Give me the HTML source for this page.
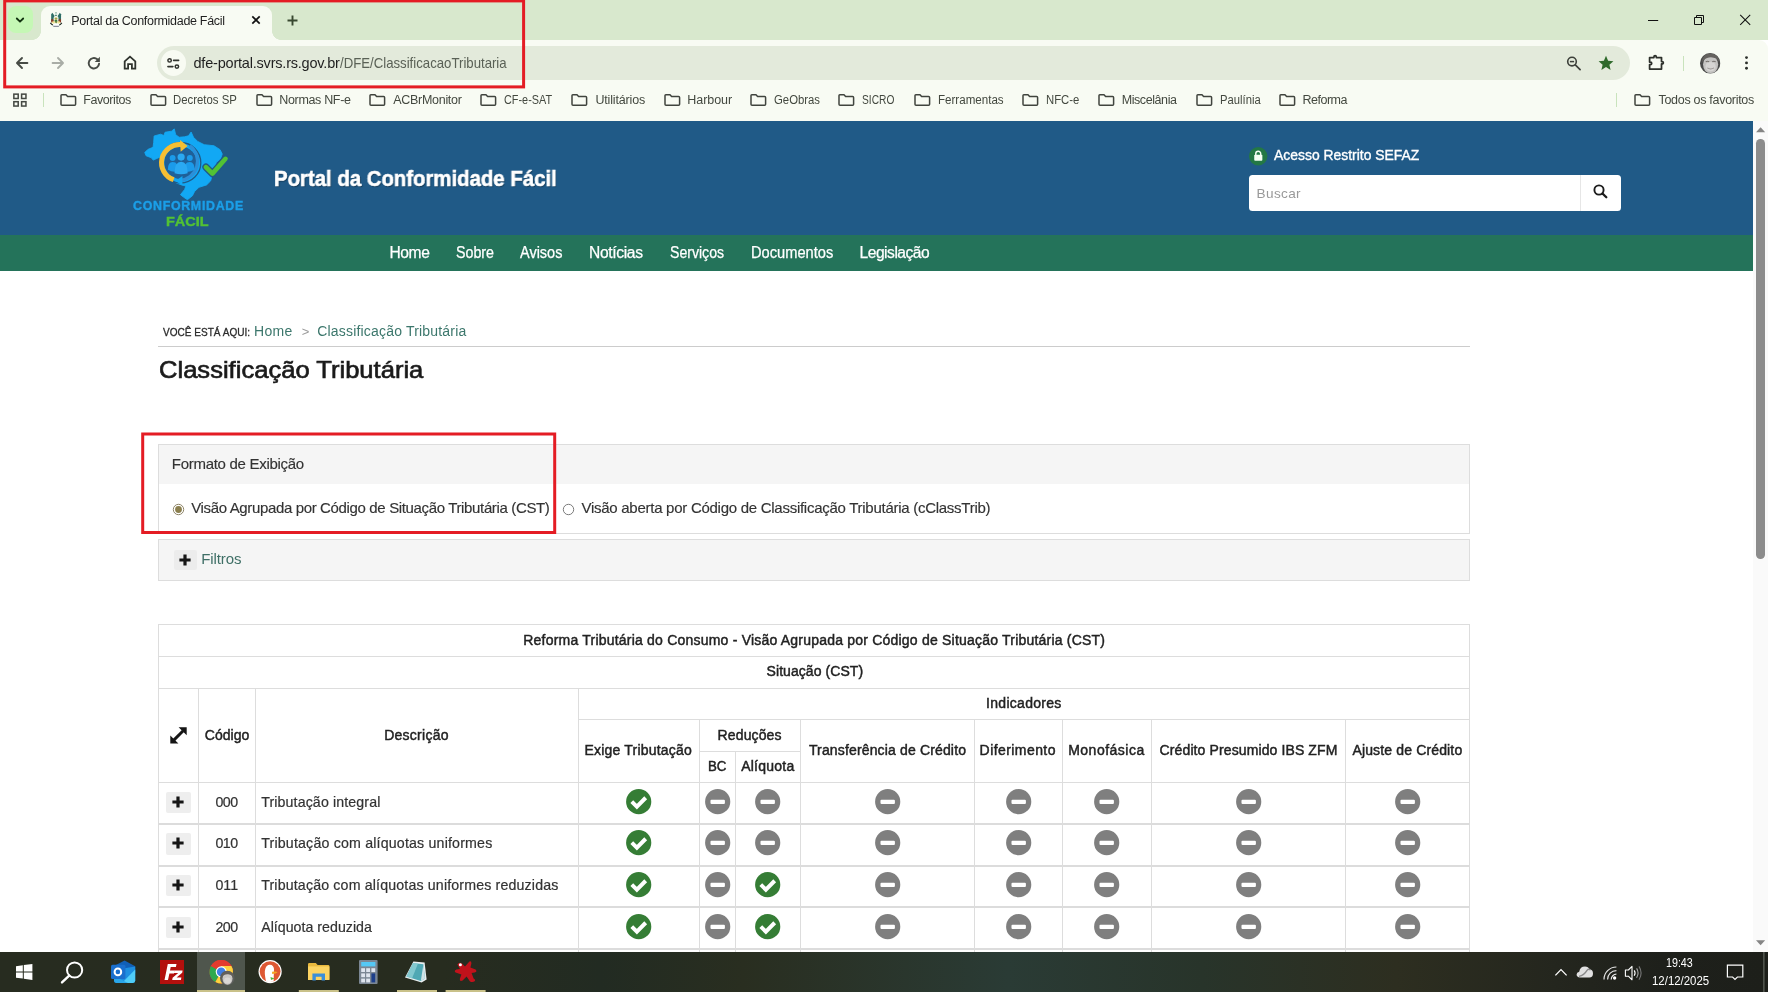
<!DOCTYPE html>
<html lang="pt-BR"><head><meta charset="utf-8"><title>Portal da Conformidade Fácil</title>
<style>
html,body{margin:0;padding:0}
body{width:1768px;height:992px;position:relative;overflow:hidden;background:#fff;font-family:"Liberation Sans",sans-serif;color:#333}
.a{position:absolute}
.t{position:absolute;transform-origin:0 0;white-space:nowrap;line-height:1;font-family:"Liberation Sans",sans-serif}
svg{position:absolute;overflow:visible}
#tabstrip{left:0;top:0;width:1768px;height:40px;background:#d8e8cd}
#toolbar{left:0;top:40px;width:1768px;height:81px;background:#f8fbf3;border-radius:0 9px 0 0}
#tab{left:41px;top:6px;width:231px;height:34px;background:#f8fbf3;border-radius:9px 9px 0 0}
#tab:before,#tab:after{content:"";position:absolute;bottom:0;width:9px;height:9px}
#tab:before{left:-9px;background:radial-gradient(circle at 0 0,transparent 8.6px,#f8fbf3 9.2px)}
#tab:after{right:-9px;background:radial-gradient(circle at 100% 0,transparent 8.6px,#f8fbf3 9.2px)}
#tsb{left:7.6px;top:6.4px;width:25.6px;height:26.2px;border-radius:8px;background:#c5f7b5}
#omni{left:157px;top:46px;width:1473px;height:34px;border-radius:17px;background:#e3eadb}
#sinfo{left:160.5px;top:50px;width:25.5px;height:26px;border-radius:13px;background:#f8fbf3}
.vsep{width:1.3px;background:#c9e3bc}
#page{left:0;top:121px;width:1753px;height:831px;background:#fff;overflow:hidden}
#hdr{left:0;top:0;width:1753px;height:113.5px;background:#205a87}
#nav{left:0;top:113.5px;width:1753px;height:36px;background:#24735a}
#sbar{left:1753px;top:121px;width:15px;height:831px;background:#fafafa}
#thumb{left:3.2px;top:18px;width:8.8px;height:419.5px;border-radius:4.4px;background:#8c8c8c}
#search{left:1249px;top:54px;width:372px;height:35.8px;border-radius:3.5px;background:#fff}
#search i{position:absolute;left:331px;top:0;width:1px;height:36px;background:#e6e6e6}
.panel{border:1px solid #ddd;box-sizing:border-box;background:#fff}
.ph{background:#f5f5f5}
.pbtn{background:#ececec;border-radius:2px}
.red{border:2.8px solid #e41c24;box-sizing:border-box}
.hl{height:1px;background:#ddd}
.vl{width:1px;background:#ddd}
.rl{height:2px;background:#dcdcdc}
#task{left:0;top:952px;width:1768px;height:40px;background:linear-gradient(90deg,#272c20 0,#272c1f 25%,#222b22 34%,#292e20 42%,#2a3b35 57%,#28342a 68%,#2d2e20 79%,#24261e 88%,#1e201b 94%,#1d1f1a 100%)}
.run{top:38px;height:2px;background:#c9c189}
#texts{will-change:transform}

</style></head>
<body>
<div class="a" id="tabstrip"></div>
<div class="a" id="toolbar"></div>
<div class="a" id="tsb"></div>
<div class="a" id="tab"></div>
<svg style="left:14.05px;top:13.95px" width="12" height="12" viewBox="0 0 12 12"><path d="M2.8 4.5 L6 7.7 L9.2 4.5" fill="none" stroke="#12320f" stroke-width="1.8" stroke-linecap="round" stroke-linejoin="round"/></svg>
<svg style="left:44px;top:8px" width="28" height="24" viewBox="0 0 1157 992">
<path d="M296 540 V262 L346 196 L452 352 V540Z" fill="#2e6e66"/><path d="M704 540 V262 L654 196 L548 352 V540Z" fill="#2e6e66"/>
<path d="M296 470 H400 V600 H296Z M704 470 H600 V600 H704Z" fill="#8b3b24"/>
<ellipse cx="498" cy="250" rx="52" ry="70" fill="#dfeee6"/><ellipse cx="496" cy="200" rx="40" ry="34" fill="#9db8aa"/><ellipse cx="494" cy="306" rx="46" ry="22" fill="#3f7b68"/>
<ellipse cx="498" cy="450" rx="104" ry="130" fill="#f1f4e6"/>
<ellipse cx="496" cy="440" rx="60" ry="46" fill="#a9a544"/><ellipse cx="492" cy="530" rx="62" ry="48" fill="#3d7d45"/>
<ellipse cx="390" cy="596" rx="62" ry="44" fill="#f1e291"/><ellipse cx="610" cy="596" rx="62" ry="44" fill="#f1e291"/>
<path d="M440 560 L500 640 L560 560Z" fill="#5c7a1e"/>
<path d="M262 612 Q330 700 380 700 H620 Q670 700 738 612" fill="none" stroke="#1d2a22" stroke-width="46"/>
<path d="M372 662 H628 L612 780 H388Z" fill="#fff"/><path d="M380 730 H620 L612 782 H388Z" fill="#8c909c"/>
</svg>
<svg style="left:251px;top:15px" width="10" height="10" viewBox="0 0 10 10"><path d="M1.3 1.3 L8.7 8.7 M8.7 1.3 L1.3 8.7" stroke="#111" stroke-width="1.7"/></svg>
<svg style="left:285.5px;top:13.5px" width="13" height="13" viewBox="0 0 13 13"><path d="M6.5 1.5 V11.5 M1.5 6.5 H11.5" stroke="#384830" stroke-width="1.9"/></svg>
<svg style="left:1648px;top:14px" width="104" height="12" viewBox="0 0 104 12"><path d="M0 6.5 H10.2" stroke="#111" stroke-width="1"/><path d="M46.5 3.5 H53.5 V10.5 H46.5 Z M48.5 3.5 V1.5 H55.5 V8.5 H53.5" fill="none" stroke="#111" stroke-width="1"/><path d="M92.2 .9 L102.2 10.9 M102.2 .9 L92.2 10.9" stroke="#111" stroke-width="1.05"/></svg>
<svg style="left:15px;top:56px" width="14" height="14" viewBox="0 0 14 14"><path d="M12.4 7 H2.4 M7 2 L2 7 L7 12" fill="none" stroke="#474b45" stroke-width="1.9" stroke-linecap="round" stroke-linejoin="round"/></svg>
<svg style="left:51px;top:56px" width="14" height="14" viewBox="0 0 14 14"><path d="M1.6 7 H11.6 M7 2 L12 7 L7 12" fill="none" stroke="#a9ada6" stroke-width="1.9" stroke-linecap="round" stroke-linejoin="round"/></svg>
<svg style="left:87px;top:56px" width="14" height="14" viewBox="0 0 14 14"><path d="M12.1 7.6 A5.2 5.2 0 1 1 10.3 3.3" fill="none" stroke="#474b45" stroke-width="1.9" stroke-linecap="round"/><path d="M12.9 .8 V6 H7.7 Z" fill="#474b45"/></svg>
<svg style="left:123px;top:55px" width="14" height="15" viewBox="0 0 14 15"><path d="M1.7 6.4 L7 1.7 L12.3 6.4 V13.7 H8.9 V9.2 H5.1 V13.7 H1.7 Z" fill="none" stroke="#2f332d" stroke-width="1.8" stroke-linejoin="miter"/></svg>
<div class="a" id="omni"></div><div class="a" id="sinfo"></div>
<svg style="left:167px;top:57.6px" width="13" height="11" viewBox="0 0 13 11"><circle cx="2.6" cy="2.4" r="1.7" fill="none" stroke="#30332e" stroke-width="1.5"/><path d="M6.6 2.4 H11.6 M.9 8.6 H5.9" stroke="#30332e" stroke-width="1.6" stroke-linecap="round"/><circle cx="9.9" cy="8.6" r="1.7" fill="none" stroke="#30332e" stroke-width="1.5"/></svg>
<svg style="left:1566px;top:55.5px" width="16" height="16" viewBox="0 0 16 16"><circle cx="6" cy="5.6" r="4.3" fill="none" stroke="#3d403a" stroke-width="1.6"/><path d="M9.3 8.9 L14.1 13.7" stroke="#3d403a" stroke-width="1.7" stroke-linecap="round"/><path d="M3.9 5.6 H8.1" stroke="#3d403a" stroke-width="1.5"/></svg>
<svg style="left:1598px;top:54.5px" width="16" height="16" viewBox="0 0 16 16"><path d="M8 .8 L10.1 5.7 L15.4 6.2 L11.4 9.7 L12.6 14.9 L8 12.1 L3.4 14.9 L4.6 9.7 L.6 6.2 L5.9 5.7 Z" fill="#2f6a2b"/></svg>
<svg style="left:1648px;top:54px" width="18" height="17" viewBox="0 0 18 17"><path d="M1.6 3.6 H5.9 V2.9 A1.2 1.2 0 0 1 8.3 2.9 V3.6 H13.5 V7.6 H14.2 A1.15 1.15 0 0 1 14.2 9.9 H13.5 V15 H1.6 V10.6 H2.4 A1.3 1.3 0 0 0 2.4 8 H1.6 Z" fill="none" stroke="#2d302b" stroke-width="1.75" stroke-linejoin="round"/></svg>
<div class="a vsep" style="left:1682.5px;top:55.5px;height:15px"></div>
<svg style="left:1699.8px;top:52.7px" width="20.4" height="20.4" viewBox="0 0 20 20"><defs><clipPath id="av"><circle cx="10" cy="10" r="10"/></clipPath></defs>
<g clip-path="url(#av)"><rect width="20" height="20" fill="#4a4b4a"/><ellipse cx="10.4" cy="11.4" rx="7.4" ry="9" fill="#c4c3c1"/><ellipse cx="10.4" cy="13.4" rx="5" ry="4.6" fill="#d6d5d3"/><path d="M1.6 10 Q2.4 0 10.6 .4 Q18.6 .6 19 9.4 Q17 4.8 13.4 4.6 Q10 3.6 7 5 Q3.6 6 1.6 10Z" fill="#64615e"/><path d="M5.6 8.6 Q7.4 7.6 9 8.6 M12 8.6 Q13.6 7.6 15.4 8.6" stroke="#77736f" stroke-width="1.1" fill="none"/><path d="M7.2 14.6 Q10.4 16.6 13.8 14.6" stroke="#9a9693" stroke-width="1" fill="none"/><path d="M0 20 Q.6 17.2 4 17.8 Q10.4 21.4 17 17.8 Q19.6 17.4 20 20Z" fill="#3a3b3c"/></g></svg>
<svg style="left:1743.5px;top:55px" width="5" height="16" viewBox="0 0 5 16"><circle cx="2.5" cy="2.6" r="1.45" fill="#2c2f2a"/><circle cx="2.5" cy="7.9" r="1.45" fill="#2c2f2a"/><circle cx="2.5" cy="13.2" r="1.45" fill="#2c2f2a"/></svg>
<svg style="left:12.9px;top:92.7px" width="14.2" height="14.2" viewBox="0 0 15 15"><g fill="none" stroke="#454943" stroke-width="1.6"><rect x=".9" y="1.2" width="4.6" height="4.6"/><rect x="9.1" y="1.2" width="4.6" height="4.6"/><rect x=".9" y="9.2" width="4.6" height="4.6"/><rect x="9.1" y="9.2" width="4.6" height="4.6"/></g></svg>
<div class="a vsep" style="left:42.5px;top:92.5px;height:14.5px"></div>
<div class="a vsep" style="left:1616px;top:92.5px;height:14.5px"></div>
<svg style="left:60px;top:94px" width="17" height="12" viewBox="0 0 17 12"><path d="M1 1.6 Q1 .8 1.8 .8 H6 L7.6 2.6 H14.6 Q15.6 2.6 15.6 3.6 V10.2 Q15.6 11.2 14.6 11.2 H2 Q1 11.2 1 10.2 Z" fill="none" stroke="#40443e" stroke-width="1.5" stroke-linejoin="round"/></svg>
<svg style="left:150px;top:94px" width="17" height="12" viewBox="0 0 17 12"><path d="M1 1.6 Q1 .8 1.8 .8 H6 L7.6 2.6 H14.6 Q15.6 2.6 15.6 3.6 V10.2 Q15.6 11.2 14.6 11.2 H2 Q1 11.2 1 10.2 Z" fill="none" stroke="#40443e" stroke-width="1.5" stroke-linejoin="round"/></svg>
<svg style="left:256px;top:94px" width="17" height="12" viewBox="0 0 17 12"><path d="M1 1.6 Q1 .8 1.8 .8 H6 L7.6 2.6 H14.6 Q15.6 2.6 15.6 3.6 V10.2 Q15.6 11.2 14.6 11.2 H2 Q1 11.2 1 10.2 Z" fill="none" stroke="#40443e" stroke-width="1.5" stroke-linejoin="round"/></svg>
<svg style="left:369px;top:94px" width="17" height="12" viewBox="0 0 17 12"><path d="M1 1.6 Q1 .8 1.8 .8 H6 L7.6 2.6 H14.6 Q15.6 2.6 15.6 3.6 V10.2 Q15.6 11.2 14.6 11.2 H2 Q1 11.2 1 10.2 Z" fill="none" stroke="#40443e" stroke-width="1.5" stroke-linejoin="round"/></svg>
<svg style="left:480px;top:94px" width="17" height="12" viewBox="0 0 17 12"><path d="M1 1.6 Q1 .8 1.8 .8 H6 L7.6 2.6 H14.6 Q15.6 2.6 15.6 3.6 V10.2 Q15.6 11.2 14.6 11.2 H2 Q1 11.2 1 10.2 Z" fill="none" stroke="#40443e" stroke-width="1.5" stroke-linejoin="round"/></svg>
<svg style="left:571px;top:94px" width="17" height="12" viewBox="0 0 17 12"><path d="M1 1.6 Q1 .8 1.8 .8 H6 L7.6 2.6 H14.6 Q15.6 2.6 15.6 3.6 V10.2 Q15.6 11.2 14.6 11.2 H2 Q1 11.2 1 10.2 Z" fill="none" stroke="#40443e" stroke-width="1.5" stroke-linejoin="round"/></svg>
<svg style="left:664px;top:94px" width="17" height="12" viewBox="0 0 17 12"><path d="M1 1.6 Q1 .8 1.8 .8 H6 L7.6 2.6 H14.6 Q15.6 2.6 15.6 3.6 V10.2 Q15.6 11.2 14.6 11.2 H2 Q1 11.2 1 10.2 Z" fill="none" stroke="#40443e" stroke-width="1.5" stroke-linejoin="round"/></svg>
<svg style="left:750px;top:94px" width="17" height="12" viewBox="0 0 17 12"><path d="M1 1.6 Q1 .8 1.8 .8 H6 L7.6 2.6 H14.6 Q15.6 2.6 15.6 3.6 V10.2 Q15.6 11.2 14.6 11.2 H2 Q1 11.2 1 10.2 Z" fill="none" stroke="#40443e" stroke-width="1.5" stroke-linejoin="round"/></svg>
<svg style="left:838px;top:94px" width="17" height="12" viewBox="0 0 17 12"><path d="M1 1.6 Q1 .8 1.8 .8 H6 L7.6 2.6 H14.6 Q15.6 2.6 15.6 3.6 V10.2 Q15.6 11.2 14.6 11.2 H2 Q1 11.2 1 10.2 Z" fill="none" stroke="#40443e" stroke-width="1.5" stroke-linejoin="round"/></svg>
<svg style="left:914px;top:94px" width="17" height="12" viewBox="0 0 17 12"><path d="M1 1.6 Q1 .8 1.8 .8 H6 L7.6 2.6 H14.6 Q15.6 2.6 15.6 3.6 V10.2 Q15.6 11.2 14.6 11.2 H2 Q1 11.2 1 10.2 Z" fill="none" stroke="#40443e" stroke-width="1.5" stroke-linejoin="round"/></svg>
<svg style="left:1022px;top:94px" width="17" height="12" viewBox="0 0 17 12"><path d="M1 1.6 Q1 .8 1.8 .8 H6 L7.6 2.6 H14.6 Q15.6 2.6 15.6 3.6 V10.2 Q15.6 11.2 14.6 11.2 H2 Q1 11.2 1 10.2 Z" fill="none" stroke="#40443e" stroke-width="1.5" stroke-linejoin="round"/></svg>
<svg style="left:1098px;top:94px" width="17" height="12" viewBox="0 0 17 12"><path d="M1 1.6 Q1 .8 1.8 .8 H6 L7.6 2.6 H14.6 Q15.6 2.6 15.6 3.6 V10.2 Q15.6 11.2 14.6 11.2 H2 Q1 11.2 1 10.2 Z" fill="none" stroke="#40443e" stroke-width="1.5" stroke-linejoin="round"/></svg>
<svg style="left:1196px;top:94px" width="17" height="12" viewBox="0 0 17 12"><path d="M1 1.6 Q1 .8 1.8 .8 H6 L7.6 2.6 H14.6 Q15.6 2.6 15.6 3.6 V10.2 Q15.6 11.2 14.6 11.2 H2 Q1 11.2 1 10.2 Z" fill="none" stroke="#40443e" stroke-width="1.5" stroke-linejoin="round"/></svg>
<svg style="left:1279px;top:94px" width="17" height="12" viewBox="0 0 17 12"><path d="M1 1.6 Q1 .8 1.8 .8 H6 L7.6 2.6 H14.6 Q15.6 2.6 15.6 3.6 V10.2 Q15.6 11.2 14.6 11.2 H2 Q1 11.2 1 10.2 Z" fill="none" stroke="#40443e" stroke-width="1.5" stroke-linejoin="round"/></svg>
<svg style="left:1634px;top:94px" width="17" height="12" viewBox="0 0 17 12"><path d="M1 1.6 Q1 .8 1.8 .8 H6 L7.6 2.6 H14.6 Q15.6 2.6 15.6 3.6 V10.2 Q15.6 11.2 14.6 11.2 H2 Q1 11.2 1 10.2 Z" fill="none" stroke="#40443e" stroke-width="1.5" stroke-linejoin="round"/></svg>
<div class="a" id="page">
<div class="a" id="hdr"></div><div class="a" id="nav"></div>
<svg style="left:128px;top:3px" width="122" height="107.95" viewBox="0 0 1121 992">
<path d="M425 45 L438 98 L470 122 L520 118 L556 108 L580 74 L602 122 L640 160 L700 190 L790 200 L846 236 L866 276 L850 322 L812 352 L800 410 L772 470 L760 522 L722 560 L652 582 L612 620 L592 660 L546 696 L510 672 L482 650 L520 602 L532 570 L492 560 L440 540 L330 420 L302 300 L232 332 L214 310 L166 292 L154 262 L182 234 L230 214 L236 168 L240 110 L300 94 L330 106 L340 76 L400 66 Z" fill="#12a8f4" stroke="#12a8f4" stroke-width="8" stroke-linejoin="round"/>
<circle cx="483" cy="356" r="150" fill="#1f6098"/>
<circle cx="483" cy="356" r="186" fill="none" stroke="#205a87" stroke-width="12"/>
<!-- blue arc (right half) -->
<path d="M568 200 A178 178 0 0 1 470 520" fill="none" stroke="#2b8fd8" stroke-width="30"/>
<path d="M500 478 L436 524 L500 566 Z" fill="#12a8f4"/>
<!-- yellow arc (left half) + arrow head -->
<path d="M420 512 A166 166 0 0 1 492 190" fill="none" stroke="#f6bf33" stroke-width="46"/>
<path d="M478 148 L548 202 L484 254 Z" fill="#f6bf33"/>
<!-- people -->
<g fill="#1b9bea">
<circle cx="410" cy="312" r="27"/><circle cx="568" cy="312" r="27"/>
<path d="M366 420 Q366 350 410 350 Q440 350 452 372 L440 440 Q392 436 366 420Z"/>
<path d="M612 420 Q612 350 568 350 Q538 350 526 372 L538 440 Q586 436 612 420Z"/>
</g>
<g fill="#2aa9f2">
<circle cx="488" cy="304" r="33"/>
<path d="M428 452 Q428 346 488 346 Q548 346 548 452 Q488 472 428 452Z"/>
</g>
<!-- check -->
<path d="M716 396 L776 456 L896 320" fill="none" stroke="#205a87" stroke-width="66" stroke-linecap="round" stroke-linejoin="round"/>
<path d="M716 396 L776 456 L896 320" fill="none" stroke="#52c234" stroke-width="42" stroke-linecap="round" stroke-linejoin="round"/>
</svg>

<svg style="left:1248.9px;top:25.6px" width="18.4" height="18.4" viewBox="0 0 19 19"><circle cx="9.5" cy="9.5" r="9.5" fill="#237845"/><rect x="5.4" y="8" width="8.4" height="6.2" rx=".9" fill="#f4fff4"/><path d="M7 8.4 V6.9 A2.55 2.55 0 0 1 12.1 6.9 V8.4" fill="none" stroke="#f4fff4" stroke-width="1.5"/></svg>
<div class="a" id="search"><i></i></div>
<svg style="left:1593.4px;top:62.7px" width="15" height="15" viewBox="0 0 15 15"><circle cx="6" cy="6" r="4.6" fill="none" stroke="#1c1c1c" stroke-width="1.9"/><path d="M9.5 9.5 L13.3 13.3" stroke="#1c1c1c" stroke-width="2.3" stroke-linecap="round"/></svg>
<div class="a" style="left:158px;top:225px;width:1312px;height:1px;background:#ccc"></div>
<div class="a panel" style="left:158px;top:323px;width:1312px;height:90px"><div class="a ph" style="left:0;top:0;width:1310px;height:38.6px"></div></div>
<svg style="left:172.3px;top:381.7px" width="13" height="13" viewBox="0 0 13 13"><circle cx="6.5" cy="6.5" r="5.2" fill="#fff" stroke="#8d8468" stroke-width="1"/><circle cx="6.5" cy="6.5" r="3.4" fill="#8b7f4e"/></svg>
<svg style="left:562.4px;top:381.7px" width="13" height="13" viewBox="0 0 13 13"><circle cx="6.5" cy="6.5" r="5.2" fill="#fff" stroke="#7b7b7b" stroke-width="1"/></svg>
<div class="a panel ph" style="left:158px;top:418px;width:1312px;height:41.5px"></div>
<div class="a pbtn" style="left:173.5px;top:428.5px;width:23.5px;height:20.5px"></div>
<svg style="left:178.9px;top:432.6px" width="12" height="12" viewBox="0 0 12 12"><path d="M6 .4 V11.6 M.4 6 H11.6" stroke="#151515" stroke-width="3.2"/></svg>
<div class="a" style="left:158px;top:503px;width:1312px;height:328px;border:1px solid #ddd;border-bottom:0;box-sizing:border-box"></div>
<div class="a hl" style="left:158px;top:535px;width:1312px"></div>
<div class="a hl" style="left:158px;top:567px;width:1312px"></div>
<div class="a hl" style="left:578px;top:598px;width:892px"></div>
<div class="a hl" style="left:699px;top:630px;width:102px"></div>
<div class="a hl" style="left:158px;top:661px;width:1312px"></div>
<div class="a rl" style="left:158px;top:701.9px;width:1312px"></div>
<div class="a rl" style="left:158px;top:743.7px;width:1312px"></div>
<div class="a rl" style="left:158px;top:784.8px;width:1312px"></div>
<div class="a rl" style="left:158px;top:826.6px;width:1312px"></div>
<div class="a vl" style="left:198px;top:567px;height:264px"></div>
<div class="a vl" style="left:255px;top:567px;height:264px"></div>
<div class="a vl" style="left:578px;top:567px;height:264px"></div>
<div class="a vl" style="left:699px;top:598px;height:233px"></div>
<div class="a vl" style="left:735px;top:630px;height:201px"></div>
<div class="a vl" style="left:800px;top:598px;height:233px"></div>
<div class="a vl" style="left:974px;top:598px;height:233px"></div>
<div class="a vl" style="left:1062px;top:598px;height:233px"></div>
<div class="a vl" style="left:1151px;top:598px;height:233px"></div>
<div class="a vl" style="left:1345px;top:598px;height:233px"></div>
<svg style="left:170.2px;top:605.6px" width="17" height="16.8" viewBox="0 0 17 17"><path d="M4 13 L13 4" stroke="#151515" stroke-width="3"/><path d="M8.6 .2 H16.8 V8.4 Z M.2 8.6 V16.8 H8.4 Z" fill="#151515"/></svg>
<div class="a pbtn" style="left:166.2px;top:670.8px;width:24.6px;height:21.5px;background:#eee"></div>
<svg style="left:172.1px;top:675.1px" width="12" height="12" viewBox="0 0 12 12"><path d="M6 .4 V11.6 M.4 6 H11.6" stroke="#151515" stroke-width="3.2"/></svg>
<svg style="left:626.0px;top:667.7px" width="25.4" height="25.4" viewBox="0 0 25 25"><circle cx="12.5" cy="12.5" r="12.4" fill="#357d35"/><path d="M5.7 12.5 L10.7 17.4 L19.4 8.6" fill="none" stroke="#fff" stroke-width="3.9"/></svg>
<svg style="left:704.7px;top:667.7px" width="25.4" height="25.4" viewBox="0 0 25 25"><circle cx="12.5" cy="12.5" r="12.4" fill="#7f7f7f"/><rect x="5.4" y="10.5" width="14.2" height="4.2" rx="1" fill="#fff"/></svg>
<svg style="left:754.9px;top:667.7px" width="25.4" height="25.4" viewBox="0 0 25 25"><circle cx="12.5" cy="12.5" r="12.4" fill="#7f7f7f"/><rect x="5.4" y="10.5" width="14.2" height="4.2" rx="1" fill="#fff"/></svg>
<svg style="left:875.0px;top:667.7px" width="25.4" height="25.4" viewBox="0 0 25 25"><circle cx="12.5" cy="12.5" r="12.4" fill="#7f7f7f"/><rect x="5.4" y="10.5" width="14.2" height="4.2" rx="1" fill="#fff"/></svg>
<svg style="left:1005.7px;top:667.7px" width="25.4" height="25.4" viewBox="0 0 25 25"><circle cx="12.5" cy="12.5" r="12.4" fill="#7f7f7f"/><rect x="5.4" y="10.5" width="14.2" height="4.2" rx="1" fill="#fff"/></svg>
<svg style="left:1094.3px;top:667.7px" width="25.4" height="25.4" viewBox="0 0 25 25"><circle cx="12.5" cy="12.5" r="12.4" fill="#7f7f7f"/><rect x="5.4" y="10.5" width="14.2" height="4.2" rx="1" fill="#fff"/></svg>
<svg style="left:1235.9px;top:667.7px" width="25.4" height="25.4" viewBox="0 0 25 25"><circle cx="12.5" cy="12.5" r="12.4" fill="#7f7f7f"/><rect x="5.4" y="10.5" width="14.2" height="4.2" rx="1" fill="#fff"/></svg>
<svg style="left:1395.2px;top:667.7px" width="25.4" height="25.4" viewBox="0 0 25 25"><circle cx="12.5" cy="12.5" r="12.4" fill="#7f7f7f"/><rect x="5.4" y="10.5" width="14.2" height="4.2" rx="1" fill="#fff"/></svg>
<div class="a pbtn" style="left:166.2px;top:712.0px;width:24.6px;height:21.5px;background:#eee"></div>
<svg style="left:172.1px;top:716.3px" width="12" height="12" viewBox="0 0 12 12"><path d="M6 .4 V11.6 M.4 6 H11.6" stroke="#151515" stroke-width="3.2"/></svg>
<svg style="left:626.0px;top:708.9px" width="25.4" height="25.4" viewBox="0 0 25 25"><circle cx="12.5" cy="12.5" r="12.4" fill="#357d35"/><path d="M5.7 12.5 L10.7 17.4 L19.4 8.6" fill="none" stroke="#fff" stroke-width="3.9"/></svg>
<svg style="left:704.7px;top:708.9px" width="25.4" height="25.4" viewBox="0 0 25 25"><circle cx="12.5" cy="12.5" r="12.4" fill="#7f7f7f"/><rect x="5.4" y="10.5" width="14.2" height="4.2" rx="1" fill="#fff"/></svg>
<svg style="left:754.9px;top:708.9px" width="25.4" height="25.4" viewBox="0 0 25 25"><circle cx="12.5" cy="12.5" r="12.4" fill="#7f7f7f"/><rect x="5.4" y="10.5" width="14.2" height="4.2" rx="1" fill="#fff"/></svg>
<svg style="left:875.0px;top:708.9px" width="25.4" height="25.4" viewBox="0 0 25 25"><circle cx="12.5" cy="12.5" r="12.4" fill="#7f7f7f"/><rect x="5.4" y="10.5" width="14.2" height="4.2" rx="1" fill="#fff"/></svg>
<svg style="left:1005.7px;top:708.9px" width="25.4" height="25.4" viewBox="0 0 25 25"><circle cx="12.5" cy="12.5" r="12.4" fill="#7f7f7f"/><rect x="5.4" y="10.5" width="14.2" height="4.2" rx="1" fill="#fff"/></svg>
<svg style="left:1094.3px;top:708.9px" width="25.4" height="25.4" viewBox="0 0 25 25"><circle cx="12.5" cy="12.5" r="12.4" fill="#7f7f7f"/><rect x="5.4" y="10.5" width="14.2" height="4.2" rx="1" fill="#fff"/></svg>
<svg style="left:1235.9px;top:708.9px" width="25.4" height="25.4" viewBox="0 0 25 25"><circle cx="12.5" cy="12.5" r="12.4" fill="#7f7f7f"/><rect x="5.4" y="10.5" width="14.2" height="4.2" rx="1" fill="#fff"/></svg>
<svg style="left:1395.2px;top:708.9px" width="25.4" height="25.4" viewBox="0 0 25 25"><circle cx="12.5" cy="12.5" r="12.4" fill="#7f7f7f"/><rect x="5.4" y="10.5" width="14.2" height="4.2" rx="1" fill="#fff"/></svg>
<div class="a pbtn" style="left:166.2px;top:753.8px;width:24.6px;height:21.5px;background:#eee"></div>
<svg style="left:172.1px;top:758.1px" width="12" height="12" viewBox="0 0 12 12"><path d="M6 .4 V11.6 M.4 6 H11.6" stroke="#151515" stroke-width="3.2"/></svg>
<svg style="left:626.0px;top:750.7px" width="25.4" height="25.4" viewBox="0 0 25 25"><circle cx="12.5" cy="12.5" r="12.4" fill="#357d35"/><path d="M5.7 12.5 L10.7 17.4 L19.4 8.6" fill="none" stroke="#fff" stroke-width="3.9"/></svg>
<svg style="left:704.7px;top:750.7px" width="25.4" height="25.4" viewBox="0 0 25 25"><circle cx="12.5" cy="12.5" r="12.4" fill="#7f7f7f"/><rect x="5.4" y="10.5" width="14.2" height="4.2" rx="1" fill="#fff"/></svg>
<svg style="left:754.9px;top:750.7px" width="25.4" height="25.4" viewBox="0 0 25 25"><circle cx="12.5" cy="12.5" r="12.4" fill="#357d35"/><path d="M5.7 12.5 L10.7 17.4 L19.4 8.6" fill="none" stroke="#fff" stroke-width="3.9"/></svg>
<svg style="left:875.0px;top:750.7px" width="25.4" height="25.4" viewBox="0 0 25 25"><circle cx="12.5" cy="12.5" r="12.4" fill="#7f7f7f"/><rect x="5.4" y="10.5" width="14.2" height="4.2" rx="1" fill="#fff"/></svg>
<svg style="left:1005.7px;top:750.7px" width="25.4" height="25.4" viewBox="0 0 25 25"><circle cx="12.5" cy="12.5" r="12.4" fill="#7f7f7f"/><rect x="5.4" y="10.5" width="14.2" height="4.2" rx="1" fill="#fff"/></svg>
<svg style="left:1094.3px;top:750.7px" width="25.4" height="25.4" viewBox="0 0 25 25"><circle cx="12.5" cy="12.5" r="12.4" fill="#7f7f7f"/><rect x="5.4" y="10.5" width="14.2" height="4.2" rx="1" fill="#fff"/></svg>
<svg style="left:1235.9px;top:750.7px" width="25.4" height="25.4" viewBox="0 0 25 25"><circle cx="12.5" cy="12.5" r="12.4" fill="#7f7f7f"/><rect x="5.4" y="10.5" width="14.2" height="4.2" rx="1" fill="#fff"/></svg>
<svg style="left:1395.2px;top:750.7px" width="25.4" height="25.4" viewBox="0 0 25 25"><circle cx="12.5" cy="12.5" r="12.4" fill="#7f7f7f"/><rect x="5.4" y="10.5" width="14.2" height="4.2" rx="1" fill="#fff"/></svg>
<div class="a pbtn" style="left:166.2px;top:795.9px;width:24.6px;height:21.5px;background:#eee"></div>
<svg style="left:172.1px;top:800.2px" width="12" height="12" viewBox="0 0 12 12"><path d="M6 .4 V11.6 M.4 6 H11.6" stroke="#151515" stroke-width="3.2"/></svg>
<svg style="left:626.0px;top:792.8px" width="25.4" height="25.4" viewBox="0 0 25 25"><circle cx="12.5" cy="12.5" r="12.4" fill="#357d35"/><path d="M5.7 12.5 L10.7 17.4 L19.4 8.6" fill="none" stroke="#fff" stroke-width="3.9"/></svg>
<svg style="left:704.7px;top:792.8px" width="25.4" height="25.4" viewBox="0 0 25 25"><circle cx="12.5" cy="12.5" r="12.4" fill="#7f7f7f"/><rect x="5.4" y="10.5" width="14.2" height="4.2" rx="1" fill="#fff"/></svg>
<svg style="left:754.9px;top:792.8px" width="25.4" height="25.4" viewBox="0 0 25 25"><circle cx="12.5" cy="12.5" r="12.4" fill="#357d35"/><path d="M5.7 12.5 L10.7 17.4 L19.4 8.6" fill="none" stroke="#fff" stroke-width="3.9"/></svg>
<svg style="left:875.0px;top:792.8px" width="25.4" height="25.4" viewBox="0 0 25 25"><circle cx="12.5" cy="12.5" r="12.4" fill="#7f7f7f"/><rect x="5.4" y="10.5" width="14.2" height="4.2" rx="1" fill="#fff"/></svg>
<svg style="left:1005.7px;top:792.8px" width="25.4" height="25.4" viewBox="0 0 25 25"><circle cx="12.5" cy="12.5" r="12.4" fill="#7f7f7f"/><rect x="5.4" y="10.5" width="14.2" height="4.2" rx="1" fill="#fff"/></svg>
<svg style="left:1094.3px;top:792.8px" width="25.4" height="25.4" viewBox="0 0 25 25"><circle cx="12.5" cy="12.5" r="12.4" fill="#7f7f7f"/><rect x="5.4" y="10.5" width="14.2" height="4.2" rx="1" fill="#fff"/></svg>
<svg style="left:1235.9px;top:792.8px" width="25.4" height="25.4" viewBox="0 0 25 25"><circle cx="12.5" cy="12.5" r="12.4" fill="#7f7f7f"/><rect x="5.4" y="10.5" width="14.2" height="4.2" rx="1" fill="#fff"/></svg>
<svg style="left:1395.2px;top:792.8px" width="25.4" height="25.4" viewBox="0 0 25 25"><circle cx="12.5" cy="12.5" r="12.4" fill="#7f7f7f"/><rect x="5.4" y="10.5" width="14.2" height="4.2" rx="1" fill="#fff"/></svg>
</div>
<div class="a" id="sbar"><div class="a" id="thumb"></div><svg style="left:3px;top:5.8px" width="9.2" height="5.4" viewBox="0 0 9 5"><path d="M0 5 L4.5 0 L9 5Z" fill="#858585"/></svg><svg style="left:3px;top:818.6px" width="9.2" height="5.4" viewBox="0 0 9 5"><path d="M0 0 L4.5 5 L9 0Z" fill="#858585"/></svg></div>
<div class="a" id="task">
<svg style="left:0;top:0" width="1768" height="40" viewBox="0 952 1768 40">
<rect x="197" y="952" width="48" height="40" fill="#4f564d"/>
<g fill="#c9c189"><rect x="197" y="990" width="48" height="2"/><rect x="298.8" y="990" width="40" height="2"/><rect x="397" y="990" width="40" height="2"/><rect x="445.6" y="990" width="40" height="2"/></g>
<!-- windows logo -->
<path d="M16 966.2 L22.8 965.2 V971.4 H16 Z M23.8 965.1 L32.4 963.9 V971.4 H23.8 Z M16 972.4 H22.8 V978.6 L16 977.7 Z M23.8 972.4 H32.4 V979.9 L23.8 978.7 Z" fill="#fff"/>
<!-- search -->
<circle cx="74.6" cy="970" r="7.6" fill="none" stroke="#fff" stroke-width="2"/><path d="M69.2 975.6 L62 982.4" stroke="#fff" stroke-width="2.4" stroke-linecap="round"/>
<!-- outlook -->
<path d="M113.4 966.2 L124.6 960.4 L135.2 966.2 V973 H113.4Z" fill="#1160b7"/>
<path d="M114 970 L135.2 966.4 V980.6 Q135.2 983 132.8 983 H116.4 Q114 983 114 980.6Z" fill="#1d8fe0"/>
<path d="M122 983 L135.2 969.6 V980.6 Q135.2 983 132.8 983Z" fill="#4fcdf8"/>
<path d="M114 976 L128 983 H116.4 Q114 983 114 980.6Z" fill="#2aa7ea"/>
<rect x="111" y="964.7" width="14.4" height="14.4" rx="1.6" fill="#1a6fcd"/>
<circle cx="117.9" cy="971.9" r="3.3" fill="none" stroke="#fff" stroke-width="2"/>
<!-- filezilla -->
<rect x="160" y="960" width="24" height="24" fill="#b3100d"/>
<path d="M164.5 980 L167.8 964 H176.5 L175.9 967 H170.7 L170 970.4 H174.6 L174 973.4 H169.4 L168 980Z" fill="#fff"/>
<path d="M174.4 970.6 H182.6 L182.2 972.8 L176.6 977.6 H181.4 L180.9 980 H172.2 L172.6 977.8 L178.2 973 H173.9Z" fill="#fff"/>
<!-- chrome -->
<g transform="translate(0.7,0.3) translate(220.5,971.5) scale(1.04) translate(-220.5,-971.5)">
<circle cx="220.5" cy="971.5" r="11.3" fill="#e33b2e"/>
<path d="M220.5 971.5 L210.7 965.9 A11.3 11.3 0 0 0 214.9 981.3 Z" fill="#2da94f"/>
<path d="M220.5 971.5 L214.9 981.3 A11.3 11.3 0 0 0 231.8 971.5 Q231.8 968 230.3 965.9 H220.5Z" fill="#fdd23e"/>
<path d="M210.7 965.9 A11.3 11.3 0 0 1 230.3 965.9 L220.5 965.9 L215.6 968.7Z" fill="#e33b2e"/>
<circle cx="220.5" cy="971.5" r="5.3" fill="#fff"/><circle cx="220.5" cy="971.5" r="4.2" fill="#3f7fe6"/>
</g>
<circle cx="227.3" cy="978" r="7.3" fill="#5d5f5d"/><ellipse cx="227.5" cy="978.6" rx="5" ry="6.2" fill="#c9c7c4"/><ellipse cx="227.5" cy="980.4" rx="3.4" ry="3" fill="#dad8d5"/><path d="M221.6 977.4 Q222.6 970.8 227.6 971 Q232.6 971.2 233.2 977.2 Q231 973.8 227.6 974.2 Q224 974 221.6 977.4Z" fill="#63605c"/>
<!-- duckduckgo -->
<circle cx="270.1" cy="971.6" r="11.6" fill="#fff"/><circle cx="270.1" cy="971.6" r="10.4" fill="#de5833"/>
<path d="M266 981.4 Q264 972 265.4 968.4 Q266.8 964.6 270 964.8 Q273.6 965 274 969 L273.6 981.6 Q269.6 982.6 266 981.4Z" fill="#fff"/>
<path d="M272 971.8 Q276 971 277.6 972.2 Q276 973.6 272.2 974Z" fill="#f5a623"/><path d="M270.5 977 L274.5 978.4 L271 980Z" fill="#4cba3c"/>
<!-- explorer -->
<path d="M308 964.2 Q308 963 309.2 963 H315.8 L317.6 965 H328.2 Q329.4 965 329.4 966.2 V979.4 H308Z" fill="#e9b93e"/>
<rect x="308" y="966.4" width="21.4" height="13.6" fill="#fcd462"/>
<path d="M312.4 980.4 V973.4 H325 V980.4 H321.6 V976.8 H315.8 V980.4Z" fill="#3b8fd9"/>
<!-- calculator -->
<rect x="359" y="960" width="18.6" height="24" rx="1" fill="#7b8794"/>
<rect x="361.2" y="962" width="14.2" height="4.4" fill="#55c8f5"/>
<g fill="#dfe5ee"><rect x="361.2" y="968.2" width="3.8" height="3.8"/><rect x="366.2" y="968.2" width="3.8" height="3.8"/><rect x="371.4" y="968.2" width="3.8" height="3.8"/><rect x="361.2" y="973.4" width="3.8" height="3.8"/><rect x="366.2" y="973.4" width="3.8" height="3.8"/><rect x="361.2" y="978.6" width="3.8" height="3.8"/><rect x="366.2" y="978.6" width="3.8" height="3.8"/></g>
<rect x="371.4" y="973.4" width="3.8" height="9" fill="#1d3f8a"/>
<!-- notepad -->
<path d="M413.4 961.4 L424.6 962.6 L426.6 979.6 L421.6 982.6 L405 977.6Z" fill="#e9eef0"/>
<path d="M413 963 L423.4 964.2 L425 978.4 L420.8 981 L406.4 976.6Z" fill="#4fa8b4"/>
<path d="M413 963 L418 963.6 L412 978.4 L406.4 976.6Z" fill="#8fd0d6" opacity=".8"/>
<path d="M423.4 964.2 L425 978.4 L420.8 981Z" fill="#cfe3e6"/>
<!-- red splat -->
<path d="M457.4 964.6 Q459 961.6 462 963.4 L465 966.4 L469.4 961.4 Q471.6 960.6 471.4 963.6 L470.4 967.4 L475.6 969.4 Q477.6 971.6 474.6 972.6 L471.6 973 L473.6 978.6 Q475.6 979.4 475 981 Q472.6 983 470 981.4 L466.6 976.4 L462.6 980.6 Q459.6 982 459.8 979 L461.4 974.4 L455.6 972.4 Q453.6 970.6 456.4 969.4 L460 969Z" fill="#c1121b"/>
<circle cx="460.4" cy="964.8" r="1.5" fill="#fff"/>
<!-- tray -->
<path d="M1555.4 975.4 L1561 969.6 L1566.6 975.4" fill="none" stroke="#fff" stroke-width="1.3"/>
<path d="M1580 977.4 Q1576.6 977.4 1576.6 974.6 Q1576.6 972.2 1579.2 971.8 Q1580 966.4 1585 966.4 Q1588.4 966.4 1589.6 969.6 Q1593 969.8 1593 973.4 Q1593 977.4 1589.4 977.4Z" fill="#e1e1e1"/>
<path d="M1579 976.4 Q1584 975.4 1587 970.4 Q1588.6 968.4 1590.6 970" fill="none" stroke="#8a8a8a" stroke-width="1.4"/>
<g fill="none" stroke="#e6e6e6" stroke-width="1.2"><path d="M1604 979.4 A12.4 12.4 0 0 1 1616.4 967"/><path d="M1607.6 979.4 A8.8 8.8 0 0 1 1616.4 970.6"/><path d="M1611.2 979.4 A5.2 5.2 0 0 1 1616.4 974.2"/></g><circle cx="1614.6" cy="978" r="1.7" fill="#fff"/>
<path d="M1625.4 970 H1628.4 L1632 966.4 V979.8 L1628.4 976.2 H1625.4Z" fill="none" stroke="#fff" stroke-width="1.1" stroke-linejoin="round"/>
<g fill="none" stroke-width="1.1"><path d="M1634.2 970.4 Q1636 973.1 1634.2 975.8" stroke="#fff"/><path d="M1636.6 968.4 Q1639.6 973.1 1636.6 977.8" stroke="#aaa"/><path d="M1639 966.4 Q1643.2 973.1 1639 979.8" stroke="#777"/></g>
<path d="M1727.4 965.2 H1742.8 V977 H1737.4 L1735 979.4 L1732.6 977 H1727.4Z" fill="none" stroke="#fff" stroke-width="1.2"/>
<rect x="1763.4" y="952" width="1" height="40" fill="#6f756d"/>
</svg>

</div>
<svg style="left:0;top:0" width="1768" height="992" viewBox="0 0 1768 992"><g fill="none" stroke="#e41c24" stroke-width="3"><rect x="4.7" y=".9" width="518.9" height="86"/><rect x="142.7" y="434" width="412" height="98.5"/></g></svg>
<div id="texts">
<span class="t" style="left:71.30px;top:15.00px;font-size:12.5px;font-weight:400;color:#1f1f1f;letter-spacing:-0.301px;">Portal da Conformidade Fácil</span>
<span class="t" style="left:193.50px;top:56.00px;font-size:14.5px;font-weight:400;color:#1f1f1f;letter-spacing:-0.204px;">dfe-portal.svrs.rs.gov.br</span>
<span class="t" style="left:340.30px;top:56.00px;font-size:14.5px;font-weight:400;color:#5a6156;transform:scaleX(0.9097);">/DFE/ClassificacaoTributaria</span>
<span class="t" style="left:83.30px;top:94.00px;font-size:12.5px;font-weight:400;color:#43483f;letter-spacing:-0.432px;">Favoritos</span>
<span class="t" style="left:173.39px;top:94.00px;font-size:12.5px;font-weight:400;color:#43483f;transform:scaleX(0.9109);">Decretos SP</span>
<span class="t" style="left:279.30px;top:94.00px;font-size:12.5px;font-weight:400;color:#43483f;letter-spacing:-0.336px;">Normas NF-e</span>
<span class="t" style="left:393.30px;top:94.00px;font-size:12.5px;font-weight:400;color:#43483f;letter-spacing:-0.298px;">ACBrMonitor</span>
<span class="t" style="left:504.20px;top:94.00px;font-size:12.5px;font-weight:400;color:#43483f;transform:scaleX(0.8691);">CF-e-SAT</span>
<span class="t" style="left:595.40px;top:94.00px;font-size:12.5px;font-weight:400;color:#43483f;letter-spacing:-0.156px;">Utilitários</span>
<span class="t" style="left:687.30px;top:94.00px;font-size:12.5px;font-weight:400;color:#43483f;letter-spacing:-0.052px;">Harbour</span>
<span class="t" style="left:774.20px;top:94.00px;font-size:12.5px;font-weight:400;color:#43483f;transform:scaleX(0.9075);">GeObras</span>
<span class="t" style="left:862.40px;top:94.00px;font-size:12.5px;font-weight:400;color:#43483f;transform:scaleX(0.8176);">SICRO</span>
<span class="t" style="left:937.57px;top:94.00px;font-size:12.5px;font-weight:400;color:#43483f;transform:scaleX(0.9266);">Ferramentas</span>
<span class="t" style="left:1045.59px;top:94.00px;font-size:12.5px;font-weight:400;color:#43483f;transform:scaleX(0.9063);">NFC-e</span>
<span class="t" style="left:1121.70px;top:94.00px;font-size:12.5px;font-weight:400;color:#43483f;letter-spacing:-0.423px;">Miscelânia</span>
<span class="t" style="left:1219.60px;top:94.00px;font-size:12.5px;font-weight:400;color:#43483f;transform:scaleX(0.8997);">Paulínia</span>
<span class="t" style="left:1302.50px;top:94.00px;font-size:12.5px;font-weight:400;color:#43483f;letter-spacing:-0.498px;">Reforma</span>
<span class="t" style="left:1658.50px;top:94.00px;font-size:12.5px;font-weight:400;color:#43483f;letter-spacing:-0.294px;">Todos os favoritos</span>
<span class="t" style="left:273.58px;top:168.00px;font-size:22px;font-weight:700;color:#fff;transform:scaleX(0.9249);-webkit-text-stroke:.6px #fff;text-shadow:1px 1px 1px rgba(0,0,0,.4);">Portal da Conformidade Fácil</span>
<span class="t" style="left:1274.10px;top:149.00px;font-size:13.9px;font-weight:400;color:#fff;-webkit-text-stroke:.35px #fff;">Acesso Restrito SEFAZ</span>
<span class="t" style="left:1256.60px;top:187.00px;font-size:13.6px;font-weight:400;color:#999;letter-spacing:0.343px;">Buscar</span>
<span class="t" style="left:389.50px;top:245.00px;font-size:15.6px;font-weight:400;color:#fff;letter-spacing:-0.412px;-webkit-text-stroke:.25px #fff;">Home</span>
<span class="t" style="left:456.10px;top:245.00px;font-size:15.6px;font-weight:400;color:#fff;transform:scaleX(0.9133);-webkit-text-stroke:.25px #fff;">Sobre</span>
<span class="t" style="left:520.40px;top:245.00px;font-size:15.6px;font-weight:400;color:#fff;transform:scaleX(0.9289);-webkit-text-stroke:.25px #fff;">Avisos</span>
<span class="t" style="left:589.00px;top:245.00px;font-size:15.6px;font-weight:400;color:#fff;letter-spacing:-0.335px;-webkit-text-stroke:.25px #fff;">Notícias</span>
<span class="t" style="left:670.40px;top:245.00px;font-size:15.6px;font-weight:400;color:#fff;transform:scaleX(0.9033);-webkit-text-stroke:.25px #fff;">Serviços</span>
<span class="t" style="left:751.06px;top:245.00px;font-size:15.6px;font-weight:400;color:#fff;transform:scaleX(0.9395);-webkit-text-stroke:.25px #fff;">Documentos</span>
<span class="t" style="left:859.60px;top:245.00px;font-size:15.6px;font-weight:400;color:#fff;letter-spacing:-0.499px;-webkit-text-stroke:.25px #fff;">Legislação</span>
<span class="t" style="left:162.70px;top:327.00px;font-size:11.4px;font-weight:400;color:#2a2a2a;transform:scaleX(0.8815);-webkit-text-stroke:.3px #2a2a2a;">VOCÊ ESTÁ AQUI:</span>
<span class="t" style="left:254.00px;top:324.00px;font-size:14px;font-weight:400;color:#3c776c;letter-spacing:0.342px;">Home</span>
<span class="t" style="left:301.80px;top:325.00px;font-size:13px;font-weight:400;color:#999;letter-spacing:-0.202px;">&gt;</span>
<span class="t" style="left:317.20px;top:324.00px;font-size:14px;font-weight:400;color:#3c776c;letter-spacing:0.189px;">Classificação Tributária</span>
<span class="t" style="left:158.72px;top:359.00px;font-size:23.6px;font-weight:400;color:#1a1a1a;transform:scaleX(1.0837);-webkit-text-stroke:.65px #1a1a1a;">Classificação Tributária</span>
<span class="t" style="left:171.80px;top:456.00px;font-size:15px;font-weight:400;color:#333;letter-spacing:-0.291px;-webkit-text-stroke:.15px #333;">Formato de Exibição</span>
<span class="t" style="left:191.20px;top:500.00px;font-size:15px;font-weight:400;color:#333;letter-spacing:-0.354px;-webkit-text-stroke:.15px #333;">Visão Agrupada por Código de Situação Tributária (CST)</span>
<span class="t" style="left:581.50px;top:500.00px;font-size:15px;font-weight:400;color:#333;letter-spacing:-0.270px;-webkit-text-stroke:.15px #333;">Visão aberta por Código de Classificação Tributária (cClassTrib)</span>
<span class="t" style="left:201.20px;top:551.00px;font-size:15px;font-weight:400;color:#3f6f66;letter-spacing:-0.091px;">Filtros</span>
<span class="t" style="left:523.30px;top:633.00px;font-size:14px;font-weight:400;color:#222;letter-spacing:0.209px;-webkit-text-stroke:.45px #222;">Reforma Tributária do Consumo - Visão Agrupada por Código de Situação Tributária (CST)</span>
<span class="t" style="left:766.60px;top:664.00px;font-size:14px;font-weight:400;color:#222;letter-spacing:0.058px;-webkit-text-stroke:.45px #222;">Situação (CST)</span>
<span class="t" style="left:986.10px;top:696.00px;font-size:14px;font-weight:400;color:#222;letter-spacing:0.281px;-webkit-text-stroke:.45px #222;">Indicadores</span>
<span class="t" style="left:204.80px;top:728.00px;font-size:14px;font-weight:400;color:#222;letter-spacing:0.042px;-webkit-text-stroke:.45px #222;">Código</span>
<span class="t" style="left:384.20px;top:728.00px;font-size:14px;font-weight:400;color:#222;letter-spacing:0.255px;-webkit-text-stroke:.45px #222;">Descrição</span>
<span class="t" style="left:584.40px;top:743.00px;font-size:14px;font-weight:400;color:#222;letter-spacing:0.206px;-webkit-text-stroke:.45px #222;">Exige Tributação</span>
<span class="t" style="left:717.60px;top:728.00px;font-size:14px;font-weight:400;color:#222;letter-spacing:0.122px;-webkit-text-stroke:.45px #222;">Reduções</span>
<span class="t" style="left:707.65px;top:759.00px;font-size:14px;font-weight:400;color:#222;transform:scaleX(0.9486);-webkit-text-stroke:.45px #222;">BC</span>
<span class="t" style="left:741.20px;top:759.00px;font-size:14px;font-weight:400;color:#222;letter-spacing:0.244px;-webkit-text-stroke:.45px #222;">Alíquota</span>
<span class="t" style="left:808.90px;top:743.00px;font-size:14px;font-weight:400;color:#222;letter-spacing:0.153px;-webkit-text-stroke:.45px #222;">Transferência de Crédito</span>
<span class="t" style="left:979.60px;top:743.00px;font-size:14px;font-weight:400;color:#222;letter-spacing:0.429px;-webkit-text-stroke:.45px #222;">Diferimento</span>
<span class="t" style="left:1068.20px;top:743.00px;font-size:14px;font-weight:400;color:#222;letter-spacing:0.488px;-webkit-text-stroke:.45px #222;">Monofásica</span>
<span class="t" style="left:1159.60px;top:743.00px;font-size:14px;font-weight:400;color:#222;letter-spacing:0.112px;-webkit-text-stroke:.45px #222;">Crédito Presumido IBS ZFM</span>
<span class="t" style="left:1352.40px;top:743.00px;font-size:14px;font-weight:400;color:#222;letter-spacing:0.149px;-webkit-text-stroke:.45px #222;">Ajuste de Crédito</span>
<span class="t" style="left:215.40px;top:795.00px;font-size:14.2px;font-weight:400;color:#333;letter-spacing:-0.441px;-webkit-text-stroke:.2px #333;">000</span>
<span class="t" style="left:261.20px;top:795.00px;font-size:14.2px;font-weight:400;color:#333;letter-spacing:0.120px;-webkit-text-stroke:.2px #333;">Tributação integral</span>
<span class="t" style="left:215.40px;top:836.00px;font-size:14.2px;font-weight:400;color:#333;letter-spacing:-0.441px;-webkit-text-stroke:.2px #333;">010</span>
<span class="t" style="left:261.20px;top:836.00px;font-size:14.2px;font-weight:400;color:#333;letter-spacing:0.184px;-webkit-text-stroke:.2px #333;">Tributação com alíquotas uniformes</span>
<span class="t" style="left:215.40px;top:878.00px;font-size:14.2px;font-weight:400;color:#333;letter-spacing:0.083px;-webkit-text-stroke:.2px #333;">011</span>
<span class="t" style="left:261.20px;top:878.00px;font-size:14.2px;font-weight:400;color:#333;letter-spacing:0.156px;-webkit-text-stroke:.2px #333;">Tributação com alíquotas uniformes reduzidas</span>
<span class="t" style="left:215.40px;top:920.00px;font-size:14.2px;font-weight:400;color:#333;letter-spacing:-0.441px;-webkit-text-stroke:.2px #333;">200</span>
<span class="t" style="left:261.20px;top:920.00px;font-size:14.2px;font-weight:400;color:#333;letter-spacing:0.016px;-webkit-text-stroke:.2px #333;">Alíquota reduzida</span>
<span class="t" style="left:1666.40px;top:957.00px;font-size:12.5px;font-weight:400;color:#fff;transform:scaleX(0.8554);">19:43</span>
<span class="t" style="left:1652.00px;top:975.00px;font-size:12.5px;font-weight:400;color:#fff;transform:scaleX(0.9136);">12/12/2025</span>
<span class="t" style="left:133.10px;top:200.00px;font-size:12.4px;font-weight:700;color:#1b9fe8;letter-spacing:0.682px;-webkit-text-stroke:.4px #1b9fe8;">CONFORMIDADE</span>
<span class="t" style="left:166.30px;top:216.00px;font-size:12.8px;font-weight:700;color:#52c234;transform:scaleX(1.1302);-webkit-text-stroke:.4px #52c234;">FÁCIL</span>
</div>
</body></html>
